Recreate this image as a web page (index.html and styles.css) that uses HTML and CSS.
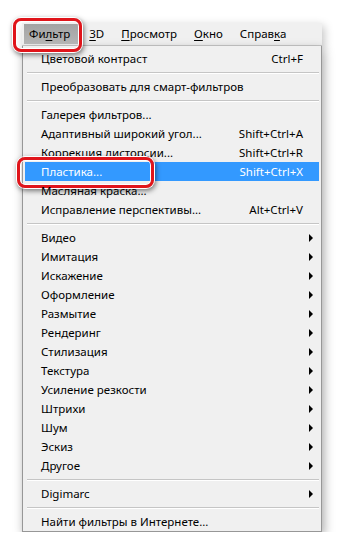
FILE: index.html
```html
<!DOCTYPE html>
<html>
<head>
  <meta charset="UTF-8">
  <title>Фильтр</title>
  <link rel="stylesheet" href="styles.css">
</head>
<body>
  <div class="menu">
    <!-- строка меню -->
    <div class="menubar">
      <span class="top active">Фи<u>л</u>ьтр<span class="ring ring-top"></span></span>
      <span class="top"><u>3</u>D</span>
      <span class="top"><u>П</u>росмотр</span>
      <span class="top"><u>О</u>кно</span>
      <span class="top">Справ<u>к</u>а</span>
    </div>

    <!-- выпадающий список -->
    <div class="dropdown">
      <div class="item"><span>Цветовой контраст</span><span class="key">Ctrl+F</span></div>
      <div class="sep"></div>
      <div class="item"><span>Преобразовать для смарт-фильтров</span></div>
      <div class="sep"></div>
      <div class="item"><span>Галерея фильтров...</span></div>
      <div class="item"><span>Адаптивный широкий угол...</span><span class="key">Shift+Ctrl+A</span></div>
      <div class="item"><span>Коррекция дисторсии...</span><span class="key">Shift+Ctrl+R</span></div>
      <div class="item selected"><span>Пластика...</span><span class="key">Shift+Ctrl+X</span><span class="ring ring-item"></span></div>
      <div class="item"><span>Масляная краска...</span></div>
      <div class="item"><span>Исправление перспективы...</span><span class="key">Alt+Ctrl+V</span></div>
      <div class="sep"></div>
      <div class="item sub"><span>Видео</span></div>
      <div class="item sub"><span>Имитация</span></div>
      <div class="item sub"><span>Искажение</span></div>
      <div class="item sub"><span>Оформление</span></div>
      <div class="item sub"><span>Размытие</span></div>
      <div class="item sub"><span>Рендеринг</span></div>
      <div class="item sub"><span>Стилизация</span></div>
      <div class="item sub"><span>Текстура</span></div>
      <div class="item sub"><span>Усиление резкости</span></div>
      <div class="item sub"><span>Штрихи</span></div>
      <div class="item sub"><span>Шум</span></div>
      <div class="item sub"><span>Эскиз</span></div>
      <div class="item sub"><span>Другое</span></div>
      <div class="sep"></div>
      <div class="item sub"><span>Digimarc</span></div>
      <div class="sep"></div>
      <div class="item"><span>Найти фильтры в Интернете...</span></div>
    </div>
  </div>
</body>
</html>
```

FILE: styles.css
```css
body {
  margin: 0;
  background: #fff;
  font-family: 'Noto Sans', 'Open Sans', sans-serif;
  font-size: 11.5px;
  color: #000;
}
.menu {
  width: 300px;
  margin: 23px 0 0 22px;
}
.menubar {
  height: 22px;
  background: #f0f0f0;
  border-bottom: 1px solid #c8c8c8;
  display: flex;
  align-items: center;
  padding-left: 2px;
  box-shadow: 2px 3px 10px rgba(0, 0, 0, 0.25);
}
.top {
  position: relative;
  height: 20px;
  line-height: 20px;
  padding: 0 9px 0 7px;
  margin-right: 1px;
}
.top u {
  text-decoration-thickness: 1px;
  text-underline-offset: 2px;
}
.top.active {
  background: linear-gradient(#a3a3a3, #b5b5b5);
  padding: 0 9px 0 5px;
  margin-right: 3px;
}
.dropdown {
  background: #f0f0f0;
  border: 1px solid #979797;
  border-top: none;
  padding: 3px 2px 0 2px;
  box-shadow: 2px 4px 10px rgba(0, 0, 0, 0.35);
}
.item {
  position: relative;
  height: 19px;
  line-height: 19px;
  display: flex;
  justify-content: space-between;
  padding: 0 16px 0 16px;
}
.item.selected {
  background: #3399ff;
  color: #fff;
}
.item.sub::after {
  content: "";
  position: absolute;
  right: 6px;
  top: 6px;
  border-left: 4px solid #000;
  border-top: 4px solid transparent;
  border-bottom: 4px solid transparent;
}
.sep {
  height: 1px;
  margin: 4px 0 3px 2px;
  background: #c5c5c5;
  border-bottom: 1px solid #fff;
}
.ring {
  position: absolute;
  border: 3px solid #e0151b;
  border-radius: 8px;
  box-shadow: 0 0 0 1px #fff, inset 0 0 0 1px #fff, 1px 2px 5px 1px rgba(0, 0, 0, 0.5);
}
.ring-top {
  left: -11px;
  top: -6px;
  width: 63px;
  height: 28px;
}
.ring-item {
  left: -8px;
  top: -5px;
  width: 131px;
  height: 25px;
}
```
